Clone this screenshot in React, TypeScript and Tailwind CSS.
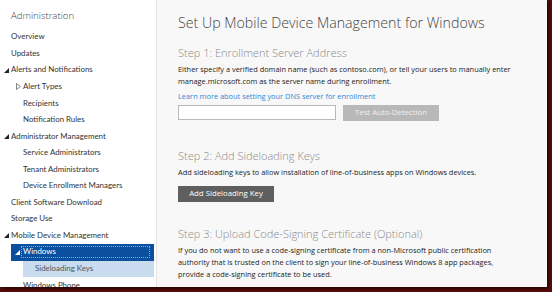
import { useState } from 'react';

type NavItem = {
  label: string;
  level: 0 | 1 | 2;
  toggle?: 'open' | 'closed';
};

const nav: NavItem[] = [
  { label: 'Overview', level: 0 },
  { label: 'Updates', level: 0 },
  { label: 'Alerts and Notifications', level: 0, toggle: 'open' },
  { label: 'Alert Types', level: 1, toggle: 'closed' },
  { label: 'Recipients', level: 1 },
  { label: 'Notification Rules', level: 1 },
  { label: 'Administrator Management', level: 0, toggle: 'open' },
  { label: 'Service Administrators', level: 1 },
  { label: 'Tenant Administrators', level: 1 },
  { label: 'Device Enrollment Managers', level: 1 },
  { label: 'Client Software Download', level: 0 },
  { label: 'Storage Use', level: 0 },
  { label: 'Mobile Device Management', level: 0, toggle: 'open' },
];

const navFont = { fontFamily: 'Lato, "Open Sans", sans-serif' };

function Toggle({ kind, light }: { kind: 'open' | 'closed'; light?: boolean }) {
  if (kind === 'open') {
    return (
      <svg width="5" height="5" viewBox="0 0 5 5" className="shrink-0">
        <path d="M5 0 L5 5 L0 5 Z" fill={light ? '#ffffff' : '#222222'} />
      </svg>
    );
  }
  return (
    <svg width="5" height="7" viewBox="0 0 5 7" className="shrink-0">
      <path d="M0.5 0.5 L4.5 3.5 L0.5 6.5 Z" fill="none" stroke="#666" strokeWidth="0.8" />
    </svg>
  );
}

function Sidebar() {
  return (
    <aside className="w-[157px] shrink-0 bg-white border-r border-[#e4e4e4] flex flex-col" style={navFont}>
      <div
        className="h-[29px] shrink-0 pl-[11px] pt-[3px] flex items-center text-[9.6px] font-light text-[#444]"
        style={{ fontFamily: '"Open Sans", sans-serif' }}
      >
        Administration
      </div>
      {nav.map((n) => (
        <div key={n.label} className="h-[16.55px] shrink-0 flex items-center text-[7.9px] text-[#333]">
          <div className="w-[11px] flex justify-center pl-[1px]">
            {n.level === 0 && n.toggle && <Toggle kind={n.toggle} />}
          </div>
          {n.level === 1 && (
            <div className="w-[12px] flex items-center pl-[5px]">
              {n.toggle && <Toggle kind={n.toggle} />}
            </div>
          )}
          <span>{n.label}</span>
        </div>
      ))}
      {/* selected section */}
      <div className="ml-[11px] mr-[2px] h-[16.55px] shrink-0 bg-[#0b4f9f] flex items-center pl-[2px] pr-[4px]">
        <div className="w-[8px] flex justify-center">
          <Toggle kind="open" light />
        </div>
        <div className="flex-1 h-[12px] border border-dotted border-[#9ab] flex items-center pl-[1px] text-[7.9px] text-white">
          Windows
        </div>
      </div>
      <div className="ml-[23px] mr-[2px] h-[16.55px] shrink-0 bg-[#c9dbee] flex items-center pl-[12px] text-[7.9px] text-[#555]">
        Sideloading Keys
      </div>
      <div className="h-[16.55px] shrink-0 flex items-center pl-[23px] text-[7.9px] text-[#333]">Windows Phone</div>
    </aside>
  );
}

function StepHeading({ children }: { children: string }) {
  return <h2 className="text-[11px] font-light text-[#8a8a8a] leading-[14px]">{children}</h2>;
}

function Body({ children }: { children: React.ReactNode }) {
  return <p className="text-[7.4px] leading-[11.8px] text-[#222]">{children}</p>;
}

export default function App() {
  const [domain, setDomain] = useState('');
  return (
    <div
      className="w-[552px] h-[292px] bg-[#5a0c0c] overflow-hidden"
      style={{ fontFamily: '"Open Sans", "Noto Sans", sans-serif' }}
    >
      <div className="w-[547px] h-[287px] flex overflow-hidden bg-[#f8f8f8] shadow-[2px_2px_3px_rgba(0,0,0,0.6)]">
        <Sidebar />
        <main className="flex-1 pl-[21px] pt-[13px]">
          <h1 className="text-[14.2px] font-light text-[#444] leading-[20px]">
            Set Up Mobile Device Management for Windows
          </h1>

          <section className="mt-[13px]">
            <StepHeading>Step 1: Enrollment Server Address</StepHeading>
            <div className="mt-[4px]">
              <Body>
                Either specify a verified domain name (such as contoso.com), or tell your users to manually enter
                <br />
                manage.microsoft.com as the server name during enrollment.
              </Body>
            </div>
            <a className="block mt-[3px] text-[7.4px] leading-[11px] text-[#2b8ad6]" href="#">
              Learn more about setting your DNS server for enrollment
            </a>
            <div className="mt-[3px] flex items-center gap-[7px]">
              <input
                value={domain}
                onChange={(e) => setDomain(e.target.value)}
                className="w-[158px] h-[15px] bg-white border border-[#b9b9b9] outline-none text-[8px] px-1"
              />
              <button className="w-[96px] h-[16px] bg-[#b8b8b8] text-[7.8px] text-[#f0f0f0]">
                Test Auto-Detection
              </button>
            </div>
          </section>

          <section className="mt-[28px]">
            <StepHeading>Step 2: Add Sideloading Keys</StepHeading>
            <div className="mt-[4px]">
              <Body>Add sideloading keys to allow installation of line-of-business apps on Windows devices.</Body>
            </div>
            <button className="mt-[4px] w-[96px] h-[16px] bg-[#5f5f5f] text-[7.8px] text-white">
              Add Sideloading Key
            </button>
          </section>

          <section className="mt-[25px]">
            <StepHeading>Step 3: Upload Code-Signing Certificate (Optional)</StepHeading>
            <div className="mt-[4px]">
              <Body>
                If you do not want to use a code-signing certificate from a non-Microsoft public certification
                <br />
                authority that is trusted on the client to sign your line-of-business Windows 8 app packages,
                <br />
                provide a code-signing certificate to be used.
              </Body>
            </div>
          </section>
        </main>
      </div>
    </div>
  );
}
